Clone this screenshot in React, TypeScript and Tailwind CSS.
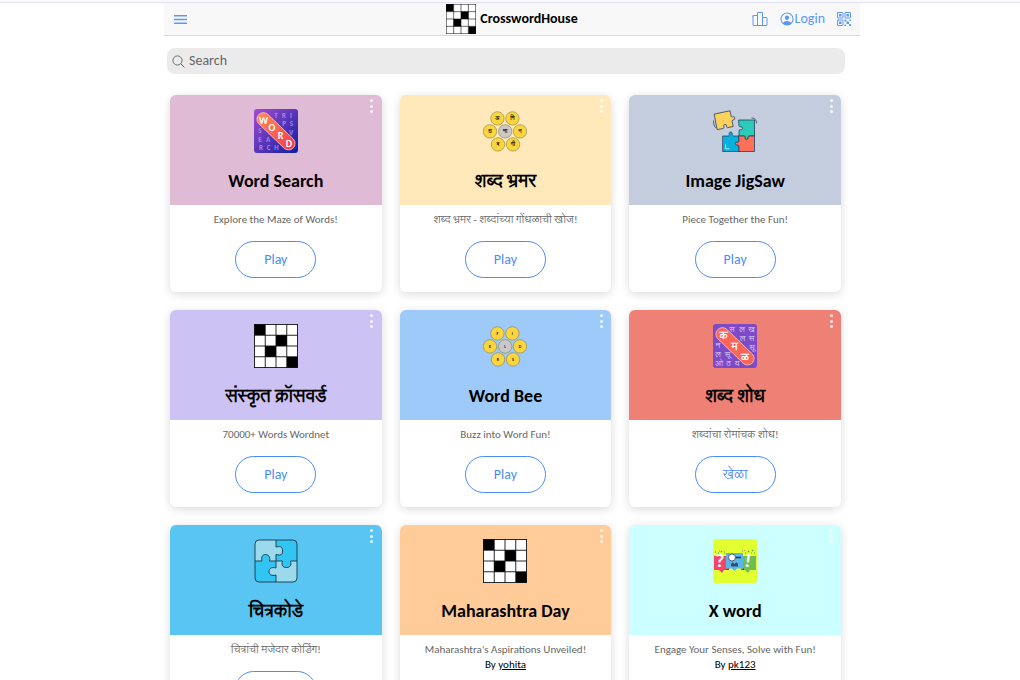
import type { ReactNode } from 'react';
import { IoPersonCircleOutline, IoPodiumOutline, IoQrCodeOutline, IoSearchOutline } from 'react-icons/io5';

function CrosswordIcon({ className }: { className: string }) {
  const black = [[0, 0], [2, 1], [1, 2], [3, 3]];
  return (
    <svg viewBox="0 0 44 44" className={className} aria-hidden="true">
      <rect width="44" height="44" fill="#fff" />
      {black.map(([c, r]) => (
        <rect key={c} x={c * 11} y={r * 11} width="11" height="11" fill="#000" />
      ))}
      <path d="M.5 0v44M11.25 0v44M22 0v44M32.75 0v44M43.5 0v44M0 .5h44M0 11.25h44M0 22h44M0 32.75h44M0 43.5h44" stroke="#111" strokeWidth=".9" fill="none" />
    </svg>
  );
}

type Glyph = [string, number, number];

const englishLetters: Glyph[] = [
  ['T', 22, 9], ['R', 30, 9], ['I', 37, 9], ['P', 30, 17], ['S', 37.5, 17], ['S', 6, 24], ['V', 37, 25.5],
  ['E', 6, 32.5], ['A', 14, 32.5], ['R', 7, 40.5], ['C', 14.5, 40.5], ['H', 22.5, 40.5],
];
const marathiLetters: Glyph[] = [
  ['स', 19, 8], ['ल', 29, 8], ['ख', 38.5, 8], ['ल', 29.5, 17], ['स', 38.5, 17], ['न', 5, 24], ['सू', 39, 26],
  ['ल', 5, 33], ['सू', 14.5, 33], ['ओ', 6, 42], ['ठ', 15.5, 42], ['य', 24, 42],
];

function WordSearchIcon({ marathi = false }: { marathi?: boolean }) {
  const letters = marathi ? marathiLetters : englishLetters;
  const word: Glyph[] = marathi
    ? [['क', 10.5, 14.5], ['म', 21.5, 25.5], ['ळ', 32, 36.5]]
    : [['W', 9.5, 14.5], ['O', 18, 22], ['R', 26.5, 30], ['D', 35, 37.5]];
  return (
    <svg viewBox="0 0 44 44" className="size-11" aria-hidden="true" textAnchor="middle">
      <defs>
        <linearGradient id="board" x1="0" y1="0" x2="1" y2="1">
          <stop offset="0" stopColor="#a54bd0" />
          <stop offset=".5" stopColor="#5a35b8" />
          <stop offset="1" stopColor="#0b1ea8" />
        </linearGradient>
        <linearGradient id="pill" x1="0" y1="0" x2="1" y2="0">
          <stop offset="0" stopColor="#ff8a50" />
          <stop offset="1" stopColor="#f53a55" />
        </linearGradient>
      </defs>
      <rect width="44" height="44" rx="3" fill={marathi ? '#7d4bc8' : 'url(#board)'} />
      <g fill={marathi ? '#e3d2f5' : '#a28be0'} fontSize={marathi ? 8 : 7} fontWeight={marathi ? 400 : 700}>
        {letters.map(([t, x, y], i) => <text key={i} x={x} y={y}>{t}</text>)}
      </g>
      <rect x="-24" y="-6.500" width="48" height="13" rx="6.500" transform="translate(22 22.3) rotate(44)" fill={marathi ? '#fa6557' : 'url(#pill)'} stroke="#ffc4bc" strokeWidth=".8" />
      <g fill="#fff" fontSize={marathi ? 11 : 10} fontWeight="700">
        {word.map(([t, x, y]) => <text key={t} x={x} y={y}>{t}</text>)}
      </g>
    </svg>
  );
}

function BeeIcon({ letters }: { letters: string[] }) {
  const spots = [[14.4, 9.4], [29.4, 9.4], [7, 22.4], [22.2, 22.4], [37, 22.4], [15, 35.4], [30, 35.4]];
  return (
    <svg viewBox="0 0 44 44" className="size-11" aria-hidden="true" textAnchor="middle">
      {spots.map(([x, y], i) => (
        <g key={i}>
          <circle cx={x} cy={y} r="6.7" fill={i === 3 ? '#c9c9cb' : '#fad53e'} stroke="#87814f" strokeWidth=".6" />
          <text x={x} y={y + 1.8} fontSize={letters[0] === 'F' ? 4 : 5.5} fontWeight="900" fill="#111">{letters[i]}</text>
        </g>
      ))}
    </svg>
  );
}

function JigsawIcon() {
  return (
    <svg viewBox="0 0 44 44" className="size-11" aria-hidden="true" stroke="#26405f" strokeWidth=".8" strokeLinejoin="round" strokeLinecap="round">
      <path d="M10 27h5.500c2-.5-.8-3.500 2-4 3-.2.800 3.500 2.800 4H26v15.500H10z" fill="#07b0dd" />
      <path d="M26 11h15.500v16H36c-2 .5.200 3.200-2.300 3.500-3 0-.500-3-2.500-3.500H26v-5.500c.5-2 3.500.500 3.500-2.300s-3.200-.2-3.500-2.200z" fill="#2bcbb8" />
      <path d="M26 27h5.200c2 .5-.5 3.500 2.500 3.500 2.500-.3.300-3 2.300-3.500h5.500v15.500H26V37c-.5-2-3.600.300-3.700-2.300 0-2.800 3.200-.2 3.700-2.200z" fill="#ff7058" />
      <path d="m1.500 5 15.500-3.200 1.200 5.700c.8 1.600 3-1.200 3.600 1.500.4 2.700-2.700 1-2.800 3l1.200 5.500-5.600 1.100c-2-.2 0-3.200-2.500-3.300-3 .4 0 3-1.900 4.200l-5.700 1z" fill="#ffd15c" />
      <path d="M39 9c3 0 4.500 2 4.500 5M.5 12c0 2.500.5 5 2 6.500" fill="none" />
      <path d="M12.500 36v3M13 39.800h3" stroke="#fff" fill="none" />
    </svg>
  );
}

function PuzzleIcon() {
  return (
    <svg viewBox="0 0 44 44" className="size-11" aria-hidden="true">
      <rect x="1" y="1" width="42" height="42" rx="4" fill="#32c5f3" />
      <path d="M5 1h17v7c6-1.500 6.500 1 6.500 4s-1 5-6.500 3.500V22h-6.500c1-4-.5-6.500-4-6.500S7 18 8 22H1V5a4 4 0 0 1 4-4z" fill="#9bd9ec" />
      <path d="M22 22h6.500c-1.200 4 0 6.500 4 6.500s5-2.500 4-6.500H43v17a4 4 0 0 1-4 4H22v-7.500c-5 1.500-7-1-7-3.500s2-5 7-3.500z" fill="#9bd9ec" />
      <g fill="none" stroke="#173847" strokeWidth=".9">
        <rect x="1" y="1" width="42" height="42" rx="4" />
        <path d="M22 1v7c6-1.500 6.500 1 6.500 4s-1 5-6.500 3.500V29c-5-1.500-7 1-7 3.500s2 5 7 3.500v7M1 22h7c-1-4 .5-6.500 3.500-6.500s5 2.500 4 6.500h13c-1.200 4 0 6.500 4 6.500s5-2.500 4-6.500H43" />
      </g>
    </svg>
  );
}

function QuizIcon() {
  return (
    <svg viewBox="0 0 44 44" className="size-11" aria-hidden="true" textAnchor="middle">
      <rect width="44" height="44" rx="3" fill="#e2ff30" />
      <path d="M1 17h15v14h-5l-2 3-3-3H1z" fill="#f3446c" />
      <path d="M28 17h15v14h-6l-2 3-3-3h-4z" fill="#6cbe55" />
      <path d="M12 31h4v-2zM31 29v2h-3z" fill="#a22a3f" />
      <path d="M13 14h17v15.500h-6L21.500 32 19 29.500h-6z" fill="#5cb4e8" />
      <path d="M22 18.500h6" stroke="#263743" strokeWidth="1.500" />
      <circle cx="19" cy="18.500" r="3.500" fill="#fff" stroke="#35444f" strokeWidth=".8" />
      <path d="M18 25q1.500-3 3.500 0 2-3 3.500 0v2.500h-7z" fill="#28536e" />
      <path d="M2 13h1M5 14h1M8 12l1 1M11 14h1M29 12h1M32 14h1M35 12l1 1M39 11l1 1M41 14h1" stroke="#39a850" strokeWidth="1.200" />
      <path d="M11 12h1M6 12h1M31 11l1 1M38 14h1" stroke="#e57935" strokeWidth="1" />
      <g fill="#fff" fontSize="19" fontWeight="700">
        <text x="7" y="28">?</text>
        <text x="35" y="28" transform="rotate(8 35 22)">!</text>
      </g>
    </svg>
  );
}

interface Game {
  title: string;
  text: string;
  color: string;
  icon: ReactNode;
  action?: string;
  author?: string;
}

const games: Game[] = [
  { title: 'Word Search', text: 'Explore the Maze of Words!', color: 'bg-[#e0bbd6]', icon: <WordSearchIcon /> },
  { title: 'शब्द भ्रमर', text: 'शब्द भ्रमर - शब्दांच्या गोंधळाची खोज!', color: 'bg-[#ffe9ba]', icon: <BeeIcon letters={['अ', 'मि', 'ध', 'मा', 'न', 'ब', 'गी']} /> },
  { title: 'Image JigSaw', text: 'Piece Together the Fun!', color: 'bg-[#c3cddd]', icon: <JigsawIcon /> },
  { title: 'संस्कृत क्रॉसवर्ड', text: '70000+ Words Wordnet', color: 'bg-[#ccc2f3]', icon: <CrosswordIcon className="size-11" /> },
  { title: 'Word Bee', text: 'Buzz into Word Fun!', color: 'bg-[#9ecafa]', icon: <BeeIcon letters={['F', 'I', 'E', 'L', 'D', 'R', 'S']} /> },
  { title: 'शब्द शोध', text: 'शब्दांचा रोमांचक शोध!', color: 'bg-[#ef8075]', icon: <WordSearchIcon marathi />, action: 'खेळा' },
  { title: 'चित्रकोडे', text: 'चित्रांची मजेदार कोडिंग!', color: 'bg-[#58c5f2]', icon: <PuzzleIcon /> },
  { title: 'Maharashtra Day', text: "Maharashtra's Aspirations Unveiled!", color: 'bg-[#ffcb99]', icon: <CrosswordIcon className="size-11" />, author: 'yohita' },
  { title: 'X word', text: 'Engage Your Senses, Solve with Fun!', color: 'bg-[#ccffff]', icon: <QuizIcon />, author: 'pk123' },
];

function GameCard({ game }: { game: Game }) {
  return (
    <article className="overflow-hidden rounded-md bg-white text-center shadow-[0_2px_10px_rgba(0,0,0,0.15)]">
      <div className={`relative flex h-[110px] flex-col items-center pt-[14px] ${game.color}`}>
        <button aria-label={`${game.title} options`} className="absolute top-1 right-1 flex h-[14px] w-3 flex-col items-center justify-between">
          <span className="size-[3px] rounded-full bg-white/80" />
          <span className="size-[3px] rounded-full bg-white/80" />
          <span className="size-[3px] rounded-full bg-white/80" />
        </button>
        {game.icon}
        <h2 className="mt-4 text-lg leading-6 font-bold text-black">{game.title}</h2>
      </div>
      <div className="flex flex-col items-center pt-[7px] pb-[14px]">
        <p className="text-[11px] leading-[15px] text-[#666]">{game.text}</p>
        {game.author && (
          <p className="text-[11px] leading-[15px] text-black">
            By <a href="#author" className="underline">{game.author}</a>
          </p>
        )}
        <button className="mt-[14px] h-[37px] w-[81px] rounded-full border border-[#4a8bfc] text-sm text-[#4a8bfc]">
          {game.action ?? 'Play'}
        </button>
      </div>
    </article>
  );
}

export default function App() {
  return (
    <div className="flex h-screen flex-col bg-white font-['Carlito','Lato','Lohit_Devanagari','Noto_Sans_Devanagari',sans-serif]">
      <div className="h-[3px] shrink-0 border-b border-[#e0dff5] bg-[#fbfbff]" />
      <div className="flex min-h-0 w-full flex-1 flex-col pl-1">
        <header className="mx-auto grid h-[33px] w-full max-w-[696px] shrink-0 grid-cols-[1fr_auto_1fr] items-center border-b border-[#dadada] bg-[#f8f8f8] px-2 text-[#5b97f8]">
          <button aria-label="Menu" className="flex w-[17px] justify-center">
            <svg viewBox="0 0 13 9" className="h-[9px] w-[13px]" stroke="currentColor" strokeWidth="1.500" aria-hidden="true">
              <path d="M0 .75h13M0 4.500h13M0 8.250h13" />
            </svg>
          </button>
          <a href="#home" className="flex items-center gap-1 text-sm font-bold text-black">
            <CrosswordIcon className="size-[30px]" />
            CrosswordHouse
          </a>
          <nav className="flex items-center justify-end gap-[11px]">
            <a href="#leaderboard" aria-label="Leaderboard"><IoPodiumOutline className="size-4" /></a>
            <a href="#login" className="flex items-center text-sm"><IoPersonCircleOutline className="size-4" />Login</a>
            <a href="#qr" aria-label="QR code"><IoQrCodeOutline className="size-4" /></a>
          </nav>
        </header>
        <main className="mx-auto min-h-0 w-full max-w-[696px] flex-1 overflow-y-auto pt-3 pr-[15px] pl-[3px] [scrollbar-width:none]">
          <label className="flex h-[26px] items-center gap-[3px] rounded-lg bg-[#ebebeb] px-1 text-[#666]">
            <IoSearchOutline className="size-[15px] shrink-0" />
            <input type="search" aria-label="Search" placeholder="Search" className="w-full bg-transparent text-sm outline-none placeholder:text-[#666]" />
          </label>
          <div className="grid grid-cols-3 items-start gap-[18px] pt-[21px] pr-1 pb-5 pl-[3px]">
            {games.map((game) => <GameCard key={game.title} game={game} />)}
          </div>
        </main>
      </div>
    </div>
  );
}
